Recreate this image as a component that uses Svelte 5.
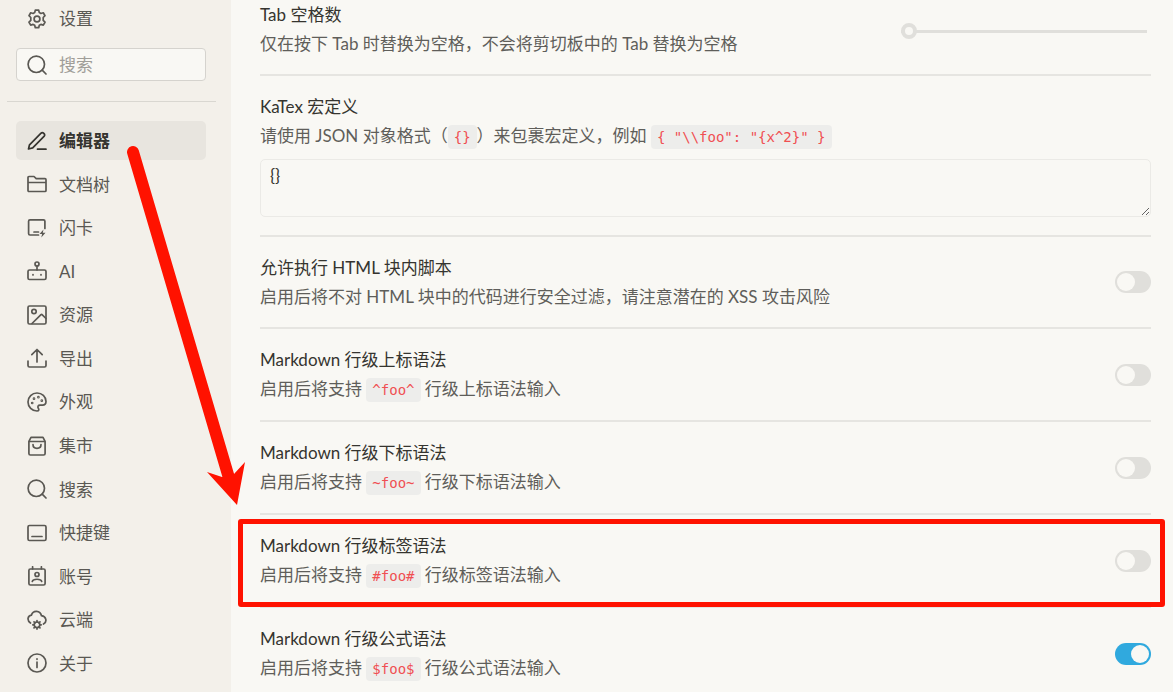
<script lang="ts">
  type Part = { text: string; code?: boolean };

  const tabs = [
    { id: "editor", label: "编辑器" },
    { id: "filetree", label: "文档树" },
    { id: "card", label: "闪卡" },
    { id: "ai", label: "AI" },
    { id: "assets", label: "资源" },
    { id: "export", label: "导出" },
    { id: "appearance", label: "外观" },
    { id: "bazaar", label: "集市" },
    { id: "search", label: "搜索" },
    { id: "keymap", label: "快捷键" },
    { id: "account", label: "账号" },
    { id: "cloud", label: "云端" },
    { id: "about", label: "关于" },
  ];

  let active = $state("editor");
  let keyword = $state("");
  let tabSize = $state(0);
  let macros = $state("{}");

  function syntax(id: string, name: string, sample: string, on = false, marked = false) {
    const desc: Part[] = [
      { text: "启用后将支持 " },
      { text: sample, code: true },
      { text: ` 行级${name}语法输入` },
    ];
    return { id, title: `Markdown 行级${name}语法`, desc, on, marked };
  }

  let switches = $state([
    {
      id: "script",
      title: "允许执行 HTML 块内脚本",
      desc: [
        { text: "启用后将不对 HTML 块中的代码进行安全过滤，请注意潜在的 XSS 攻击风险" },
      ] as Part[],
      on: false,
      marked: false,
    },
    syntax("sup", "上标", "^foo^"),
    syntax("sub", "下标", "~foo~"),
    syntax("tag", "标签", "#foo#", false, true),
    syntax("math", "公式", "$foo$", true),
  ]);
</script>

{#snippet icon(name: string)}
  <svg class="icon" viewBox="0 0 20 20" aria-hidden="true">
    {#if name === "settings"}
      <path
        d="M8.300 1.200h3.400l.6 2.400 1.600.9 2.400-.7 1.700 2.900-1.800 1.800v2.900l1.800 1.800-1.700 2.900-2.400-.7-1.600.9-.6 2.400H8.300l-.6-2.400-1.600-.9-2.400.7L2 13.200l1.800-1.800V8.500L2 6.700l1.700-2.900 2.400.7 1.600-.9z"
      />
      <circle cx="10" cy="10" r="2.900" />
    {:else if name === "editor"}
      <path d="M1.500 18l1-4.200L13.800 2.400c2-2 5 1 3.200 3L5.700 16.900zM10.500 18.200H19" />
    {:else if name === "filetree"}
      <path d="M1 16.500v-13q0-1 1-1h5l2.200 2.200H18q1 0 1 1v10.800q0 1-1 1H2q-1 0-1-1zM1 8.500h18" />
    {:else if name === "card"}
      <path d="M11.500 17H3q-1.400 0-1.400-1.400V3.200q0-1.400 1.400-1.400h13.500q1.400 0 1.400 1.400v7.300M7 14h4.500" />
      <path class="solid" d="M16.500 11.600l-4 4.400h2.600l-.8 3.600 4.200-4.800h-2.700z" />
    {:else if name === "ai"}
      <rect x="1" y="9" width="18" height="9.500" rx="1.500" />
      <circle cx="10" cy="3" r="2" />
      <path d="M10 5v4M6 13.500v.5M14 13.500v.5" />
    {:else if name === "assets"}
      <rect x="1" y="1" width="18" height="18" rx="1.500" />
      <circle cx="7" cy="6.500" r="2.200" />
      <path d="M5 18.500L14 9.700q.7-.5 1.300.1L19 13.500" />
    {:else if name === "export"}
      <path d="M1 13v4.500q0 1.500 1.500 1.500h15q1.500 0 1.500-1.500V13M10 14V1.700M4.800 6.700L10 1.500l5.200 5.200" />
    {:else if name === "appearance"}
      <path
        d="M10 1a9 9 0 0 0 0 18c2.200 0 2.100-1.700 1.300-2.800-.9-1.500-.3-3 1.700-3h2.500c2.200 0 3.500-1.500 3.500-3.600C19 4.700 15 1 10 1z"
      />
      <circle cx="5.200" cy="11" r=".5" />
      <circle cx="7" cy="6.700" r=".5" />
      <circle cx="11.400" cy="5.200" r=".5" />
      <circle cx="14.800" cy="8.700" r=".5" />
    {:else if name === "bazaar"}
      <path d="M1.900 5.300L4 1.400h12l2.100 3.900v12.200q0 1.500-1.500 1.500H3.400q-1.500 0-1.500-1.500zM2 5.500h16M6 8.500q0 3.800 4 3.800t4-3.800" />
    {:else if name === "search"}
      <circle cx="9.300" cy="9.300" r="8.200" />
      <path d="M15.200 15.200L19 19" />
    {:else if name === "keymap"}
      <rect x="1" y="2.500" width="18" height="15" rx="1.500" />
      <path d="M5 13.500h10" />
    {:else if name === "account"}
      <rect x="1.900" y="3" width="16.200" height="16" rx="1.500" />
      <path d="M5.600 .8V3M14.400 .8V3M5.300 15.500c.8-3 8.600-3 9.400 0" />
      <circle cx="10" cy="8.500" r="2" />
    {:else if name === "cloud"}
      <path d="M3.500 13C-.5 10.300.8 5.600 4.400 5.200 6-.3 13.300.2 14.500 5.700c5 .7 5.800 6.300 2 8.300" />
      <circle cx="10" cy="14.800" r="2.800" />
      <path d="M10 10.500V12M10 17.600v1.500M5.800 14.800h1.400M12.800 14.800h1.400M7 11.800l1 1M12 16.800l1 1M13 11.800l-1 1M8 16.800l-1 1" />
    {:else if name === "about"}
      <circle cx="10" cy="10" r="9" />
      <path d="M10 9v5.500M10 5.800v.5" />
    {/if}
  </svg>
{/snippet}

<div class="dialog">
  <aside>
    <div class="heading">{@render icon("settings")}<span>设置</span></div>
    <label class="search">
      {@render icon("search")}
      <input type="text" placeholder="搜索" aria-label="搜索" bind:value={keyword} />
    </label>
    <hr />
    <nav>
      {#each tabs as tab (tab.id)}
        <button class="tab" class:active={active === tab.id} onclick={() => (active = tab.id)}>
          {@render icon(tab.id)}
          <span>{tab.label}</span>
        </button>
      {/each}
    </nav>
  </aside>

  <main>
    <div class="scroll">
      <div class="row">
        <label class="text" for="tab-size">
          <span class="title">Tab 空格数</span>
          <span class="desc">仅在按下 Tab 时替换为空格，不会将剪切板中的 Tab 替换为空格</span>
        </label>
        <input id="tab-size" class="slider" type="range" min="0" max="8" bind:value={tabSize} />
      </div>

      <div class="row stacked">
        <label class="text" for="macros">
          <span class="title">KaTex 宏定义</span>
          <span class="desc"
            >请使用 JSON 对象格式（<code>{"{}"}</code>）来包裹宏定义，例如 <code
              >{'{ "\\\\foo": "{x^2}" }'}</code
            ></span
          >
        </label>
        <textarea id="macros" spellcheck="false" bind:value={macros}></textarea>
      </div>

      {#each switches as item (item.id)}
        <div class="row" class:marked={item.marked}>
          <label class="text" for={item.id}>
            <span class="title">{item.title}</span>
            <span class="desc"
              >{#each item.desc as part}{#if part.code}<code>{part.text}</code
                  >{:else}{part.text}{/if}{/each}</span
            >
          </label>
          <input id={item.id} class="switch" type="checkbox" bind:checked={item.on} />
        </div>
      {/each}
    </div>
  </main>

  <svg class="pointer" width="122" height="362" viewBox="0 0 122 362" aria-hidden="true">
    <path class="shaft" d="M8 8L104 334" />
    <path class="head" d="M82 328L97 333L109 330L120 318L112 361z" />
  </svg>
</div>

<style>
  :global(body) {
    margin: 0;
    background: #f9f8f4;
  }

  .dialog {
    position: relative;
    display: flex;
    height: 100vh;
    overflow: hidden;
    color: #35342f;
    font-family: Lato, "Noto Sans CJK SC", sans-serif;
    font-size: 17px;
    font-weight: 400;
    line-height: 25px;
  }

  aside {
    display: flex;
    flex-direction: column;
    flex: 0 0 231px;
    box-sizing: border-box;
    min-width: 0;
    padding: 6px 0 9px;
    background: #f3f0ea;
    color: #5a5853;
  }

  .icon {
    flex: none;
    width: 20px;
    height: 20px;
    fill: none;
    stroke: currentColor;
    stroke-width: 1.7;
    stroke-linecap: round;
    stroke-linejoin: round;
  }

  .icon .solid {
    fill: currentColor;
    stroke: none;
  }

  .heading {
    display: flex;
    align-items: center;
    gap: 12px;
    padding: 0 27px;
  }

  .search {
    display: flex;
    align-items: center;
    gap: 12px;
    height: 31px;
    margin: 17px 25px 0 16px;
    padding: 0 10px;
    border: 1px solid #d5d3ce;
    border-radius: 4px;
    background: #f9f8f4;
  }

  .search input {
    flex: 1;
    width: 100%;
    min-width: 0;
    padding: 0;
    border: 0;
    outline: 0;
    background: none;
    color: inherit;
    font: inherit;
  }

  .search input::placeholder {
    color: #a09e99;
  }

  hr {
    align-self: stretch;
    height: 1px;
    margin: 20px 15px 19px 7px;
    border: 0;
    background: #d9d7d1;
  }

  nav {
    display: flex;
    flex: 1;
    flex-direction: column;
    justify-content: space-between;
    padding: 0 25px 0 16px;
  }

  .tab {
    display: flex;
    align-items: center;
    gap: 12px;
    height: 39px;
    padding: 0 11px;
    border: 0;
    border-radius: 5px;
    background: none;
    color: inherit;
    font: inherit;
    text-align: left;
  }

  .tab.active {
    background: #e8e5df;
    color: #35342f;
    font-weight: 700;
  }

  main {
    flex: 1;
    min-width: 0;
    overflow: hidden;
  }

  /* scrolled a little way down the settings list */
  .scroll {
    margin-top: -16px;
    padding: 0 22px 0 29px;
  }

  .row {
    position: relative;
    display: flex;
    align-items: center;
    justify-content: space-between;
    padding: 18px 0;
    border-bottom: 2px solid #e6e5e1;
  }

  .row.stacked {
    flex-direction: column;
    align-items: stretch;
  }

  .row.marked::after {
    content: "";
    position: absolute;
    inset: 4px -14px -1px -22px;
    border: 5px solid #ff1200;
    border-radius: 3px;
    pointer-events: none;
  }

  .text {
    display: flex;
    flex-direction: column;
    gap: 4px;
  }

  .desc {
    color: #5f5e5a;
  }

  code {
    display: inline-block;
    padding: 0 6px;
    border-radius: 4px;
    background: #ededeb;
    color: #f04f52;
    font-family: "DejaVu Sans Mono", monospace;
    font-size: 14px;
    line-height: 24px;
    white-space: pre;
  }

  textarea {
    box-sizing: border-box;
    width: 100%;
    height: 58px;
    margin-top: 10px;
    padding: 3px 9px;
    border: 1px solid #ebeae6;
    border-radius: 5px;
    outline: 0;
    background: none;
    color: inherit;
    font: inherit;
    resize: vertical;
  }

  .slider {
    appearance: none;
    width: 246px;
    height: 16px;
    margin: 4px 4px 0 0;
    background: linear-gradient(#e0dfdb, #e0dfdb) center / 100% 3px no-repeat;
  }

  .slider::-webkit-slider-thumb {
    appearance: none;
    box-sizing: border-box;
    width: 16px;
    height: 16px;
    border: 4px solid #e0dfdb;
    border-radius: 50%;
    background: #f9f8f4;
  }

  .switch {
    appearance: none;
    flex: none;
    box-sizing: border-box;
    width: 36px;
    height: 22px;
    margin: 0;
    padding: 2px;
    border-radius: 11px;
    background: #e0dfdb;
  }

  .switch::before {
    content: "";
    display: block;
    width: 18px;
    height: 18px;
    border-radius: 50%;
    background: #f9f8f4;
  }

  .switch:checked {
    background: #30a9de;
  }

  .switch:checked::before {
    margin-left: auto;
  }

  .pointer {
    position: absolute;
    top: 144px;
    left: 125px;
    pointer-events: none;
  }

  .shaft {
    fill: none;
    stroke: #ff1200;
    stroke-width: 12;
    stroke-linecap: round;
  }

  .head {
    fill: #ff1200;
  }
</style>
